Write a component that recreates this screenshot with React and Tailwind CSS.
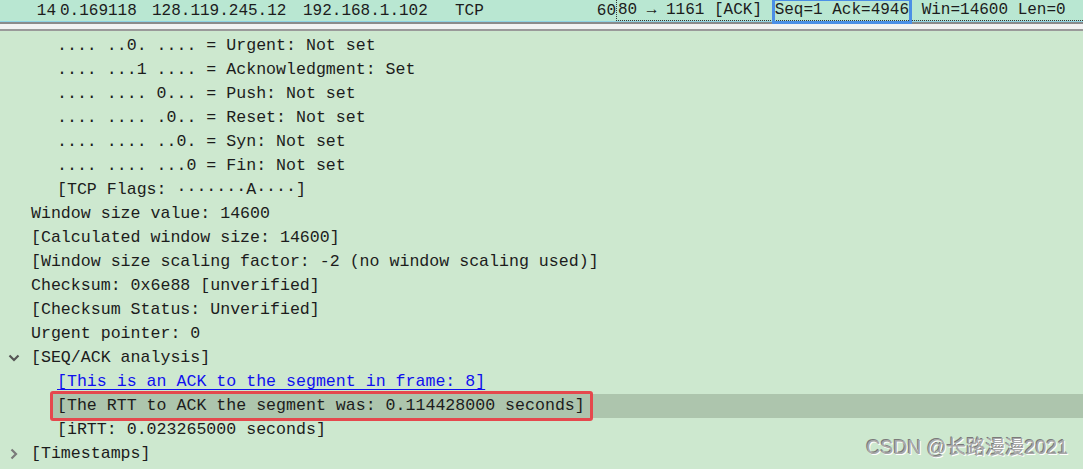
import React from 'react'

const mono = { fontFamily: '"Liberation Mono", "DejaVu Sans Mono", monospace' }

const rows = [
  { indent: 'pl-[57px]', text: '.... ..0. .... = Urgent: Not set' },
  { indent: 'pl-[57px]', text: '.... ...1 .... = Acknowledgment: Set' },
  { indent: 'pl-[57px]', text: '.... .... 0... = Push: Not set' },
  { indent: 'pl-[57px]', text: '.... .... .0.. = Reset: Not set' },
  { indent: 'pl-[57px]', text: '.... .... ..0. = Syn: Not set' },
  { indent: 'pl-[57px]', text: '.... .... ...0 = Fin: Not set' },
  { indent: 'pl-[57px]', text: '[TCP Flags: ·······A····]' },
  { indent: 'pl-[31px]', text: 'Window size value: 14600' },
  { indent: 'pl-[31px]', text: '[Calculated window size: 14600]' },
  { indent: 'pl-[31px]', text: '[Window size scaling factor: -2 (no window scaling used)]' },
  { indent: 'pl-[31px]', text: 'Checksum: 0x6e88 [unverified]' },
  { indent: 'pl-[31px]', text: '[Checksum Status: Unverified]' },
  { indent: 'pl-[31px]', text: 'Urgent pointer: 0' },
]

const Chevron = ({ open }) => (
  <svg width="12" height="12" viewBox="0 0 12 12" className="absolute left-[8px] top-[6px]">
    {open ? (
      <path d="M1.5 3.5 L6 8 L10.5 3.5" fill="none" stroke="#555555" strokeWidth="2.2" />
    ) : (
      <path d="M3.5 1.5 L8 6 L3.5 10.5" fill="none" stroke="#7a7a7a" strokeWidth="2.2" />
    )}
  </svg>
)

const App = () => {
  return (
    <div className="w-[1083px] h-[469px] overflow-hidden bg-[#cde8cf] text-[#1c1c1c] relative" style={mono}>
      {/* Packet list row */}
      <div className="h-[22px] bg-[#b9e7d2] border-b border-[#8fd3e3] flex items-center text-[16px] leading-[22px] whitespace-pre">
        <span className="w-[56px] text-right">14</span>
        <span className="w-[96px] pl-[4px]">0.169118</span>
        <span className="w-[151px]">128.119.245.12</span>
        <span className="w-[152px]">192.168.1.102</span>
        <span className="w-[137px]">TCP</span>
        <span className="w-[24px] text-right">60</span>
        <span className="flex-1 h-full pl-[1px] border-l border-b border-dotted border-[#333] flex items-center relative">
          <span>80 → 1161 [ACK] </span>
          <span className="border-[3px] border-[#4b8fe6] px-0 h-[26px] leading-[19px] mb-[-3px] mt-[-1px]">Seq=1 Ack=4946</span>
          <span> Win=14600 Len=0</span>
        </span>
      </div>
      <div className="h-[2px] bg-[#8a8a8a]" />
      <div className="h-[5px] bg-[#f2f2f2]" />
      <div className="h-[2px] bg-[#9a9a9a]" />

      {/* Details tree */}
      <div className="text-[16.6px] leading-[24px] whitespace-pre pt-[3px]">
        {rows.map((r, i) => (
          <div key={i} className={`h-[24px] ${r.indent}`}>{r.text}</div>
        ))}
        <div className="h-[24px] pl-[31px] relative">
          <Chevron open />
          [SEQ/ACK analysis]
        </div>
        <div className="h-[24px] pl-[57px]">
          <span className="text-[#1010ee] underline decoration-1 underline-offset-[3px]">
            [This is an ACK to the segment in frame: 8]
          </span>
        </div>
        <div className="h-[24px] relative bg-[#adc5ad] ml-[50px] pl-[7px]">
          [The RTT to ACK the segment was: 0.114428000 seconds]
          <div className="absolute left-0 top-[-3px] w-[543px] h-[30px] border-[3px] border-[#e5484d] rounded-[3px]" />
        </div>
        <div className="h-[24px] pl-[57px]">[iRTT: 0.023265000 seconds]</div>
        <div className="h-[24px] pl-[31px] relative">
          <Chevron />
          [Timestamps]
        </div>
      </div>

      {/* Watermark */}
      <div
        className="absolute right-[15px] bottom-[7px] text-[19.5px] text-[#a8a8a8]"
        style={{
          fontFamily: '"Liberation Sans", "Noto Sans CJK SC", sans-serif',
          textShadow: '1px 1px 0 #ffffff, -1px -1px 0 #7a7a7a',
        }}
      >
        CSDN @长路漫漫2021
      </div>
    </div>
  )
}

export default App
